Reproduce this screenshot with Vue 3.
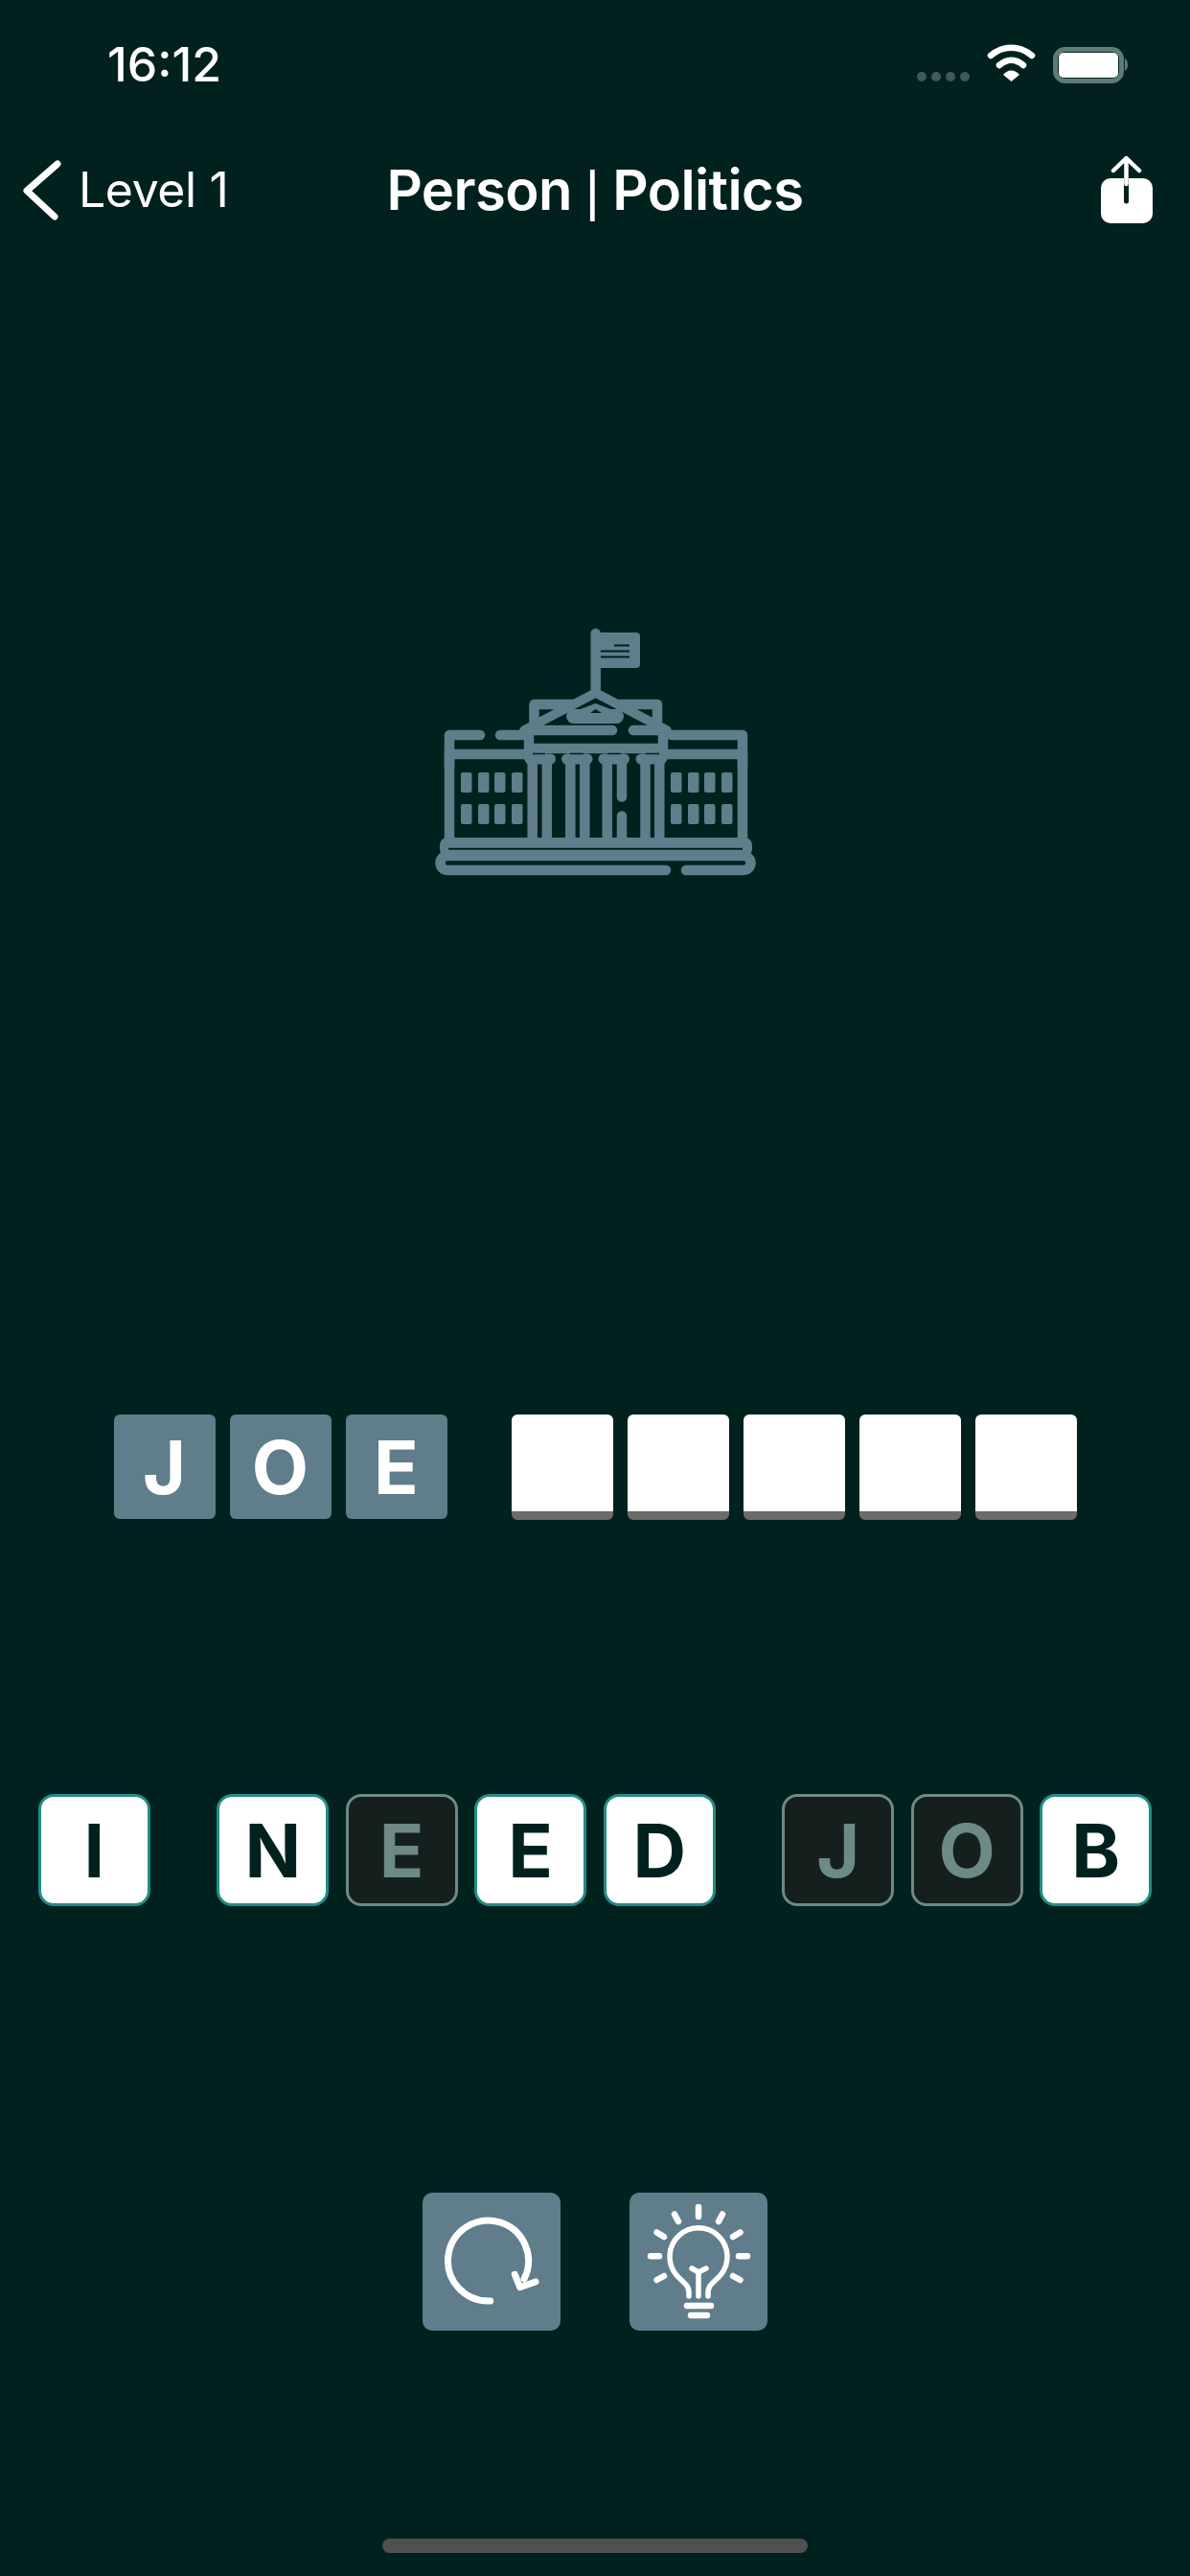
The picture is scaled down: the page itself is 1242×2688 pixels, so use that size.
<template>
  <div class="screen">
    <!-- status bar -->
    <div class="status">
      <span class="time">16:12</span>
      <svg class="status-icons" width="225" height="45" viewBox="955 45 225 45">
        <circle v-for="x in [962, 977, 992, 1007]" :key="x" :cx="x" cy="80" r="5" fill="#3f5a57" />
        <path d="M1034 58 C1047 47 1064 47 1077 58" fill="none" stroke="#fff" stroke-width="6.5" stroke-linecap="round" />
        <path d="M1043 68 C1051 61 1060 61 1068 68" fill="none" stroke="#fff" stroke-width="6.5" stroke-linecap="round" />
        <path d="M1047 78 C1052 72 1059 72 1064 78 L1055.500 85 Z" fill="#fff" />
        <rect x="1101.500" y="51.500" width="69" height="33" rx="10" fill="none" stroke="#5f7b78" stroke-width="5" />
        <rect x="1105" y="55" width="62" height="26" rx="5" fill="#fff" />
        <path d="M1174 61 C1178 63 1178 72 1174 74 Z" fill="#5f7b78" />
      </svg>
    </div>

    <!-- nav -->
    <div class="nav">
      <div class="back">
        <svg width="44" height="70" viewBox="0 0 44 70">
          <path d="M36 8 L4 36 L33 63" fill="none" stroke="#fff" stroke-width="7" stroke-linecap="round" stroke-linejoin="round" />
        </svg>
        <span>Level 1</span>
      </div>
      <div class="title">Person <span class="sep">|</span> Politics</div>
      <svg class="share" width="56" height="72" viewBox="0 0 56 72">
        <rect x="1" y="24" width="54" height="47" rx="10" fill="#fff" />
        <path d="M27.500 24 V48" stroke="#01211f" stroke-width="5" stroke-linecap="round" />
        <path d="M27.500 30 V3 M14 16 L27.500 3 L41 16" fill="none" stroke="#fff" stroke-width="4.500" stroke-linecap="round" stroke-linejoin="round" />
      </svg>
    </div>

    <!-- building -->
    <div class="hero">
      <svg width="380" height="290" viewBox="0 0 380 290">
        <g fill="none" stroke="#607d8b" stroke-width="10.500" stroke-linecap="round" stroke-linejoin="round">
          <path d="M190.700 21 V80" />
          <path d="M126.500 118 V95 H166 M215 95 H255 V118" />
          <path d="M116 122 L190.700 83 L265 122" stroke-width="9.500" />
          <path d="M38 160 V127 H70 M91 127 H116" />
          <path d="M38 147 H118" />
          <path d="M344 160 V127 H270" />
          <path d="M264 147 H344" />
          <path d="M38 145 V240 M344 145 V240" />
          <path d="M121 122 V150 M261 122 V150" />
          <path d="M121 122 H208 M230 122 H263" />
          <path d="M122 141 H260" />
          <path d="M167.500 107.500 H212.500" stroke-width="15" />
          <path d="M122 152 H143.500 M160.500 152 H182 M199 152 H220.500 M238 152 H259.500" stroke-width="11" />
          <path d="M124.700 155 V238 M139.800 155 V238 M164.300 155 V238 M179.300 155 V238 M202.700 155 V238 M218 155 V191.500 M218 211.500 V238 M242.500 155 V238 M257.300 155 V238" />
          <path d="M264 268 H36 A7.500 7.500 0 0 1 36 253 H345 A7.500 7.500 0 0 1 345 268 H285" />
        </g>
        <rect x="28" y="234" width="326" height="20" rx="8" fill="#607d8b" />
        <!-- flag -->
        <rect x="190" y="20" width="47" height="37" rx="4" fill="#607d8b" />
        <path d="M210 33.500 H226 M196 39.500 H226 M196 45.500 H226" stroke="#01211f" stroke-width="1.800" />
        <path d="M172 101 L190.500 94 L209 101 Z" fill="#607d8b" />
        <path d="M185 104 L190.500 100 L197 104 Z" fill="#01211f" />
        <path d="M125 146.500 H138 M164 146.500 H178 M203 146.500 H217 M243 146.500 H257" stroke="#01211f" stroke-width="1.500" />
        <path d="M37 245.700 H344" stroke="#01211f" stroke-width="2" />
        <g fill="#607d8b">
          <template v-for="y in [166, 199]" :key="y">
            <rect v-for="x in [50, 68, 85, 103, 269, 287, 304, 322]" :key="x" :x="x" :y="y" width="11.500" height="21" rx="2" />
          </template>
        </g>
      </svg>
    </div>

    <!-- answer -->
    <div class="answer">
      <div v-for="(word, i) in answer" :key="i" class="word">
        <div v-for="(ch, j) in word" :key="j" :class="['slot', { empty: ch === '' }]">{{ ch }}</div>
      </div>
    </div>

    <!-- letters -->
    <div class="letters">
      <div v-for="(word, i) in letters" :key="i" class="word">
        <div v-for="item in word" :key="item.id" :class="['key', { used: item.used }]">{{ item.ch }}</div>
      </div>
    </div>

    <!-- tools -->
    <div class="tools">
      <button class="tool">
        <svg width="144" height="144" viewBox="0 0 144 144" fill="none" stroke="#fff" stroke-linecap="round" stroke-linejoin="round">
          <path d="M70.700 113 A42 42 0 1 1 106 90" stroke-width="7" />
          <path d="M96.300 85.300 L101.700 98.700 L118 93" stroke-width="7" />
        </svg>
      </button>
      <button class="tool">
        <svg width="144" height="144" viewBox="0 0 144 144" fill="none" stroke="#fff" stroke-linecap="round" stroke-linejoin="round">
          <path d="M62 108 V104 C62 96 56 94 49 86 A30 30 0 1 1 95 86 C88 94 82 96 82 104 V108" stroke-width="5.500" />
          <path d="M65 79 L72 83 L80 79 M72 83 V108" stroke-width="5.500" />
          <path d="M60 118 H85 M64 128 H81" stroke-width="6.500" />
          <path d="M72 15 V25 M47 22.500 L51 30 M97 22.500 L93 30 M28.500 41.500 L36 46 M115.500 41.500 L108 46 M22 66.300 H31 M114 66.300 H123 M28.500 91 L36 87 M108 87 L115.500 91" stroke-width="6.500" />
        </svg>
      </button>
    </div>

    <div class="home"></div>
  </div>
</template>

<script setup>
const answer = [
  ['J', 'O', 'E'],
  ['', '', '', '', '']
]

// used letters are already placed in the answer
const toKeys = (text, used = []) =>
  text.split('').map((ch, i) => ({ id: i, ch, used: used.includes(i) }))

const letters = [
  toKeys('I'),
  toKeys('NEED', [1]),
  toKeys('JOB', [0, 1])
]
</script>

<style>
body {
  background: #01211f;
}
</style>

<style scoped>
.screen {
  width: 1242px;
  height: 2688px;
  background: #01211f;
  display: flex;
  flex-direction: column;
  font-family: Inter, "Liberation Sans", sans-serif;
  color: #fff;
  overflow: hidden;
}

.status {
  display: flex;
  justify-content: space-between;
  align-items: center;
  height: 45px;
  margin-top: 45px;
  padding: 0 62px 0 112px;
}

.time {
  font-size: 50px;
  font-weight: 500;
  line-height: 45px;
}

.status-icons {
  display: block;
}

.nav {
  display: grid;
  grid-template-columns: 1fr auto 1fr;
  align-items: center;
  height: 95px;
  margin-top: 60px;
  padding: 0 38px;
}

.back {
  display: flex;
  align-items: center;
  gap: 14px;
  margin-left: -14px;
  font-size: 50px;
  font-weight: 400;
  letter-spacing: -0.4px;
}

.title {
  font-size: 58px;
  font-weight: 600;
  letter-spacing: -0.6px;
}

.sep {
  font-family: "Liberation Sans", sans-serif;
  font-weight: 400;
}

.share {
  justify-self: end;
}

.hero {
  display: flex;
  justify-content: center;
  height: 290px;
  margin-top: 395px;
}

.word {
  display: flex;
}

.answer {
  display: flex;
  justify-content: center;
  gap: 67px;
  height: 110px;
  margin-top: 546px;
}

.answer .word {
  gap: 15px;
}

.slot {
  width: 106px;
  height: 109px;
  box-sizing: border-box;
  display: flex;
  align-items: center;
  justify-content: center;
  background: #607d8b;
  border-radius: 6px;
  font-size: 77px;
  font-weight: 700;
}

.slot.empty {
  height: 110px;
  background: #fff;
  border-bottom: 9px solid #6b6b6b;
}

.letters {
  display: flex;
  justify-content: center;
  gap: 69.5px;
  margin-top: 286px;
}

.letters .word {
  gap: 17.5px;
}

.key {
  width: 117px;
  height: 117px;
  box-sizing: border-box;
  display: flex;
  align-items: center;
  justify-content: center;
  background: #fff;
  border: 3px solid #1f8f85;
  border-radius: 16px;
  color: #01211f;
  font-size: 77px;
  font-weight: 700;
}

.key.used {
  background: #141f1e;
  border-color: #6f8a85;
  color: #6d8a85;
}

.tools {
  display: flex;
  justify-content: center;
  gap: 72px;
  margin-top: 299px;
}

.tool {
  width: 144px;
  height: 144px;
  padding: 0;
  border: none;
  border-radius: 10px;
  background: #607d8b;
}

.tool svg {
  display: block;
}

.home {
  width: 444px;
  height: 15px;
  margin: 217px auto 0;
  border-radius: 8px;
  background: #505050;
}
</style>
